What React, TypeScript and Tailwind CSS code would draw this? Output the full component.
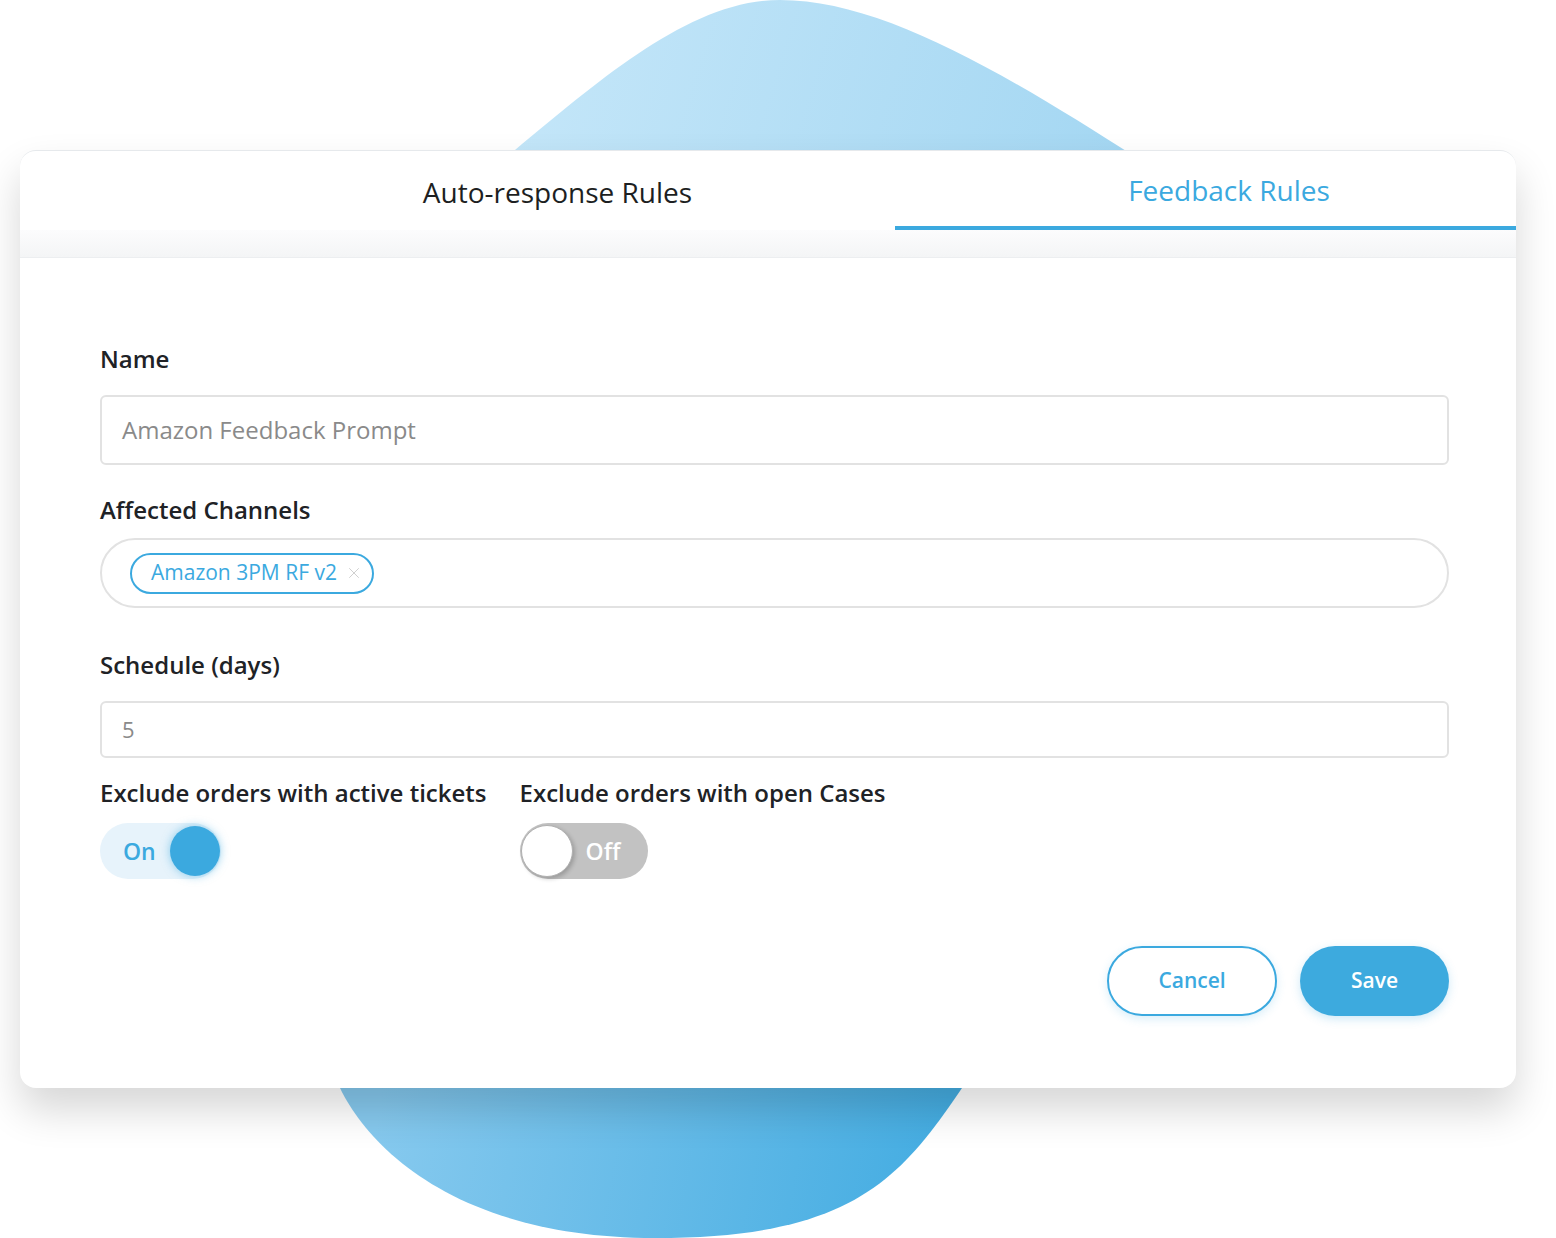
import { X } from "lucide-react";

const font = { fontFamily: '"Open Sans", "Noto Sans", sans-serif' };

function Blob() {
  return (
    <svg className="absolute inset-0" width="1556" height="1238" viewBox="0 0 1556 1238">
      <defs>
        <linearGradient id="blobTop" gradientUnits="userSpaceOnUse" x1="500" y1="0" x2="1150" y2="200">
          <stop offset="0" stopColor="#c6e7f9" />
          <stop offset="1" stopColor="#a2d6f2" />
        </linearGradient>
        <linearGradient id="blobBottom" gradientUnits="userSpaceOnUse" x1="380" y1="1100" x2="930" y2="1200">
          <stop offset="0" stopColor="#86c9ee" />
          <stop offset="1" stopColor="#45ade2" />
        </linearGradient>
      </defs>
      <path d="M780 0 C880 0 1000 70 1140 160 L700 160 L515 150 C600 80 690 0 780 0 Z" fill="url(#blobTop)" />
      <path d="M340 1060 L962 1060 L962 1088 C900 1180 850 1238 655 1238 C460 1238 370 1150 340 1088 Z" fill="url(#blobBottom)" />
    </svg>
  );
}

function Field({ label, children, className = "" }: { label: string; children: React.ReactNode; className?: string }) {
  return (
    <div className={className}>
      <div className="h-[30px] text-[24px] leading-[30px] font-semibold text-[#202226] whitespace-nowrap">{label}</div>
      {children}
    </div>
  );
}

export default function App() {
  return (
    <div className="relative w-[1556px] h-[1238px] overflow-hidden bg-white" style={font}>
      <Blob />
      <div className="relative ml-[20px] mt-[150px] w-[1496px] h-[938px] rounded-[16px] bg-white border-t border-[#e6e9ec] shadow-[0_22px_40px_rgba(0,0,0,0.16)] overflow-hidden">
        <div className="flex h-[79px]">
          <div className="w-[875px] pl-[200px] flex items-center justify-center text-[28px] text-[#1d1f22] pt-[2px]">
            Auto-response Rules
          </div>
          <div className="flex-1 pl-[47px] flex items-center justify-center text-[28px] text-[#3ba9df] pt-[2px] border-b-4 border-[#3ba9df]">
            Feedback Rules
          </div>
        </div>
        <div className="h-[28px] bg-gradient-to-b from-[#fcfcfd] to-[#f4f5f6] border-b border-[#eceef0]" />

        <div className="pl-[80px] pr-[67px]">
          <Field label="Name" className="mt-[86px]">
            <div className="mt-[21px] h-[70px] rounded-[6px] border-2 border-[#e2e2e2] flex items-center px-[20px] text-[24px] text-[#8a8a8a]">
              Amazon Feedback Prompt
            </div>
          </Field>

          <Field label="Affected Channels" className="mt-[30px]">
            <div className="mt-[13px] h-[70px] rounded-full border-2 border-[#e2e2e2] flex items-center px-[28px]">
              <div className="h-[41px] w-[244px] rounded-full border-2 border-[#3ba9df] flex items-center pl-[19px] gap-[8px] text-[21px] text-[#3ba9df]">
                Amazon 3PM RF v2
                <X size={18} strokeWidth={1.3} className="text-[#cfcfcf]" />
              </div>
            </div>
          </Field>

          <Field label="Schedule (days)" className="mt-[42px]">
            <div className="mt-[21px] h-[57px] rounded-[6px] border-2 border-[#e2e2e2] flex items-center px-[20px] text-[22px] text-[#8a8a8a]">
              5
            </div>
          </Field>

          <div className="mt-[20px] flex gap-[33px]">
            <Field label="Exclude orders with active tickets">
              <div className="mt-[15px] w-[121px] h-[56px] rounded-full bg-[#e7f3fb] flex items-center justify-between pl-[23px] pr-[1px]">
                <span className="text-[23px] font-semibold text-[#3ba9df]">On</span>
                <div className="w-[50px] h-[50px] rounded-full bg-[#3ba9df] shadow-[0_0_10px_rgba(59,169,223,0.55)]" />
              </div>
            </Field>
            <Field label="Exclude orders with open Cases">
              <div className="mt-[15px] w-[128px] h-[56px] rounded-full bg-[#c2c2c2] flex items-center pl-[1px] gap-[13px]">
                <div className="w-[52px] h-[52px] rounded-full bg-white border border-[#b0b0b0] shadow-[2px_2px_4px_rgba(0,0,0,0.2)]" />
                <span className="text-[23px] font-semibold text-white">Off</span>
              </div>
            </Field>
          </div>

          <div className="mt-[67px] flex justify-end gap-[23px]">
            <button className="w-[170px] h-[70px] rounded-full border-2 border-[#3ba9df] bg-white text-[21px] font-semibold text-[#3ba9df] shadow-[0_3px_10px_rgba(59,169,223,0.2)]">
              Cancel
            </button>
            <button className="w-[149px] h-[70px] rounded-full bg-[#3daade] text-[21px] font-semibold text-white shadow-[0_3px_10px_rgba(59,169,223,0.25)]">
              Save
            </button>
          </div>
        </div>
      </div>
    </div>
  );
}
